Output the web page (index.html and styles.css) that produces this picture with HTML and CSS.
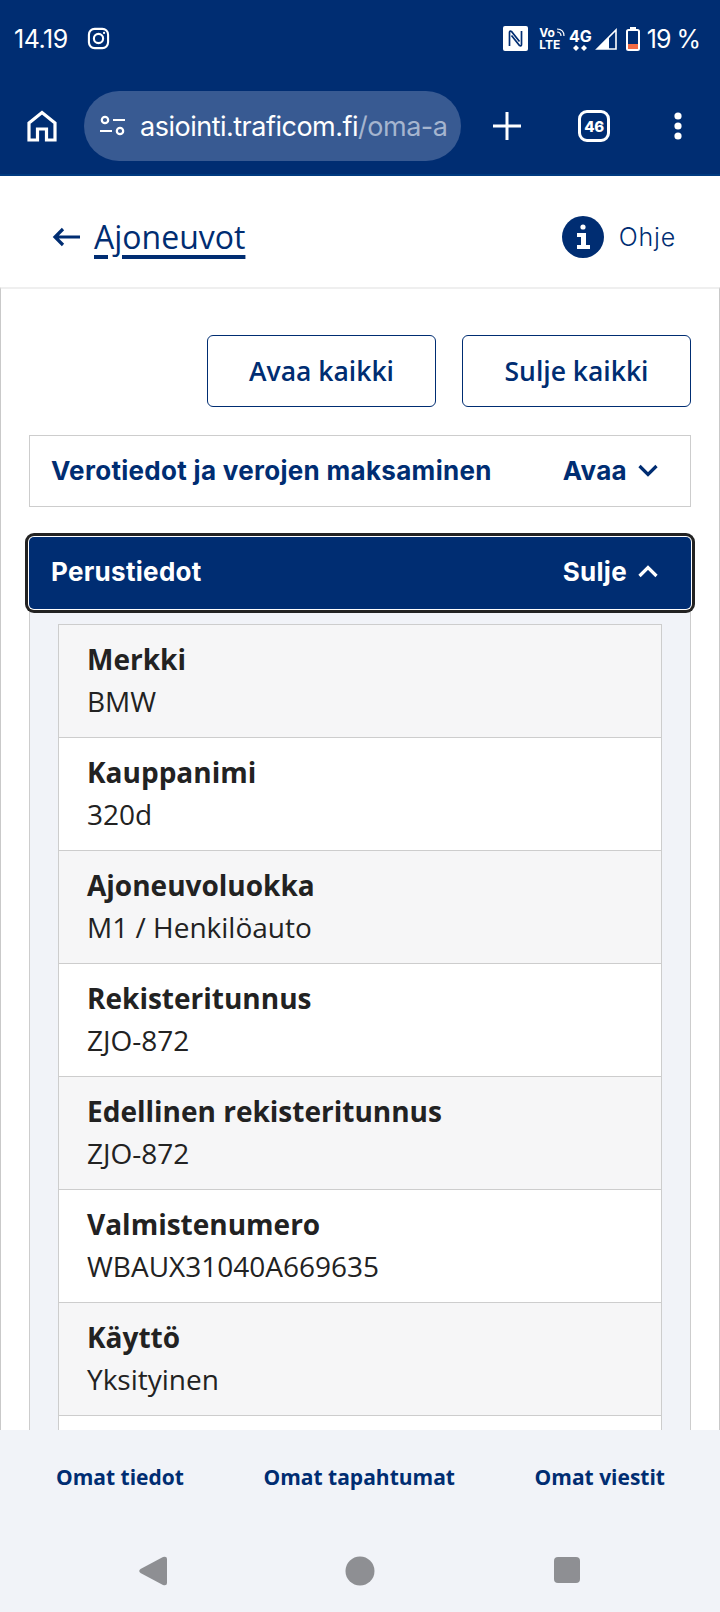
FILE: index.html
```html
<!DOCTYPE html>
<html lang="fi">

<head>
  <meta charset="UTF-8">
  <meta name="viewport" content="width=device-width, initial-scale=1.0">
  <title>Ajoneuvot</title>
  <link rel="stylesheet" href="styles.css">
</head>

<body>
  <div class="status-bar">
    <div class="status-left">
      <span class="status-time">14.19</span>
      <svg class="ig-icon" width="23" height="23" viewBox="0 0 24 24" fill="none" stroke="#fff" stroke-width="2.2">
        <rect x="2" y="2" width="20" height="20" rx="6"/>
        <circle cx="12" cy="12" r="4.8"/>
        <circle cx="17.8" cy="6.2" r="1.2" fill="#fff" stroke="none"/>
      </svg>
    </div>
    <div class="status-right">
      <svg width="25" height="25" viewBox="0 0 25 25">
        <rect width="25" height="25" rx="2" fill="#fff"/>
        <path fill="none" stroke="#002d72" stroke-width="1.7" d="M6.5 20V6.5Q6.5 4.5 8.5 5.5L16.5 15.5M18.5 5V18.5Q18.5 20.5 16.5 19.5L8.5 9.5"/>
      </svg>
      <div class="net-label">
        <span>Vo<svg width="10" height="10" viewBox="0 0 10 10" fill="none" stroke="#fff" stroke-width="1.2"><path d="M1 2Q8 2 8 9M1 5Q5 5 5 9"/></svg></span>
        <span>LTE</span>
      </div>
      <div class="net-type">
        <span>4G</span>
        <svg width="14" height="6" viewBox="0 0 14 6" fill="#fff"><path d="M0 3L3 0L6 3L3 6Z"/><path d="M8 3L11 0L14 3L11 6Z"/></svg>
      </div>
      <svg class="signal-icon" width="22" height="22" viewBox="0 0 22 22" fill="none" stroke="#fff" stroke-width="1.6">
        <path d="M2 21L21 2V21Z"/>
        <path d="M2 21L14 9V21Z" fill="#fff" stroke="none"/>
      </svg>
      <svg class="battery-icon" width="14" height="24" viewBox="0 0 14 24">
        <path fill="#fff" d="M4 0H10V2H4Z"/>
        <rect x="1" y="3" width="12" height="20" rx="1.5" fill="none" stroke="#fff" stroke-width="2"/>
        <rect x="2" y="17" width="10" height="5" fill="#f26b43"/>
      </svg>
      <span class="status-battery">19 %</span>
    </div>
  </div>

  <div class="toolbar">
    <svg width="30" height="32" viewBox="0 0 30 32" fill="none" stroke="#fff" stroke-width="3.2">
      <path d="M2 30V13L15 2.5L28 13V30H19.5V19H10.5V30Z"/>
    </svg>
    <div class="url-pill">
      <svg width="28" height="22" viewBox="0 0 28 22" fill="none" stroke="#fff" stroke-width="2.2">
        <circle cx="6" cy="5" r="3.2"/>
        <path d="M14 5H26M1 16H13"/>
        <circle cx="21" cy="16" r="3.2"/>
      </svg>
      <span class="url-text">asiointi.traficom.fi<span class="url-path">/oma-a</span></span>
    </div>
    <svg class="plus-icon" width="28" height="28" viewBox="0 0 28 28" stroke="#fff" stroke-width="3">
      <path d="M0 14H28M14 0V28"/>
    </svg>
    <div class="tab-count">46</div>
    <svg class="menu-icon" width="10" height="28" viewBox="0 0 10 28" fill="#fff">
      <circle cx="5" cy="4" r="3.6"/>
      <circle cx="5" cy="14" r="3.6"/>
      <circle cx="5" cy="24" r="3.6"/>
    </svg>
  </div>

  <div class="page-head">
    <a class="back-link">
      <svg width="28" height="20" viewBox="0 0 28 20" fill="none" stroke="#002d72" stroke-width="3.2">
        <path d="M11 2L3 10L11 18M3 10H28"/>
      </svg>
      <span>Ajoneuvot</span>
    </a>
    <div class="help-link">
      <svg width="42" height="42" viewBox="0 0 42 42">
        <circle cx="21" cy="21" r="21" fill="#002d72"/>
        <circle cx="21" cy="11" r="2.6" fill="#fff"/>
        <path fill="#fff" d="M15 17H24V29H28V33H15V29H19V21H15Z"/>
      </svg>
      <span>Ohje</span>
    </div>
  </div>

  <main class="content">
    <div class="actions">
      <button class="btn">Avaa kaikki</button>
      <button class="btn">Sulje kaikki</button>
    </div>

    <div class="acc-head">
      <span>Verotiedot ja verojen maksaminen</span>
      <span class="acc-toggle">Avaa
        <svg width="20" height="13" viewBox="0 0 20 13" fill="none" stroke="#002d72" stroke-width="3.2"><path d="M1.5 2L10 10.5L18.5 2"/></svg>
      </span>
    </div>

    <div class="acc-open">
      <div class="acc-head acc-head-active">
        <span>Perustiedot</span>
        <span class="acc-toggle">Sulje
          <svg width="20" height="13" viewBox="0 0 20 13" fill="none" stroke="#fff" stroke-width="3.2"><path d="M1.5 11L10 2.5L18.5 11"/></svg>
        </span>
      </div>
      <div class="acc-panel">
        <dl class="info-list">
          <div class="info-row"><dt>Merkki</dt><dd>BMW</dd></div>
          <div class="info-row"><dt>Kauppanimi</dt><dd>320d</dd></div>
          <div class="info-row"><dt>Ajoneuvoluokka</dt><dd>M1 / Henkilöauto</dd></div>
          <div class="info-row"><dt>Rekisteritunnus</dt><dd>ZJO-872</dd></div>
          <div class="info-row"><dt>Edellinen rekisteritunnus</dt><dd>ZJO-872</dd></div>
          <div class="info-row"><dt>Valmistenumero</dt><dd>WBAUX31040A669635</dd></div>
          <div class="info-row"><dt>Käyttö</dt><dd>Yksityinen</dd></div>
          <div class="info-row"></div>
        </dl>
      </div>
    </div>
  </main>

  <nav class="bottom-nav">
    <a>Omat tiedot</a>
    <a>Omat tapahtumat</a>
    <a>Omat viestit</a>
  </nav>

  <div class="system-nav">
    <svg width="28" height="30" viewBox="0 0 28 30" fill="#8e8f93">
      <path d="M1.5 13L24 1Q28 0 28 3V27Q28 30 24 29L1.5 17Q-1 15 1.5 13Z"/>
    </svg>
    <svg width="30" height="30" viewBox="0 0 30 30" fill="#8e8f93"><circle cx="15" cy="15" r="14.5"/></svg>
    <svg width="28" height="28" viewBox="0 0 28 28" fill="#8e8f93"><rect x="1" y="1" width="26" height="26" rx="4"/></svg>
  </div>
</body>

</html>
```

FILE: styles.css
```css
* {
  box-sizing: border-box;
}

html,
body {
  margin: 0;
  height: 100%;
}

body {
  display: flex;
  flex-direction: column;
  height: 1612px;
  overflow: hidden;
  font-family: 'Open Sans', Arial, sans-serif;
  background-color: #fff;
  color: #222;
}

.status-bar {
  height: 78px;
  flex: none;
  display: flex;
  justify-content: space-between;
  align-items: center;
  padding: 0 20px 1px 14px;
  background-color: #002d72;
  color: #fff;
  font-family: 'Inter', Roboto, sans-serif;
}

.status-left,
.status-right {
  display: flex;
  align-items: center;
}

.status-time {
  font-size: 25px;
  letter-spacing: -0.5px;
  margin-right: 19px;
}

.net-label {
  display: flex;
  flex-direction: column;
  margin-left: 11px;
  font-size: 12px;
  font-weight: 700;
  line-height: 12px;
}

.net-label svg {
  margin-left: 1px;
}

.net-type {
  display: flex;
  flex-direction: column;
  align-items: center;
  margin-left: 3px;
  font-size: 16px;
  font-weight: 700;
  line-height: 18px;
}

.signal-icon {
  margin-left: 3px;
}

.battery-icon {
  margin-left: 9px;
}

.status-battery {
  font-size: 25px;
  letter-spacing: -1px;
  margin-left: 7px;
}

.toolbar {
  height: 98px;
  flex: none;
  display: flex;
  align-items: center;
  padding-left: 27px;
  background-color: #002d72;
  border-bottom: 2px solid #003a80;
}

.url-pill {
  width: 377px;
  height: 70px;
  margin-left: 27px;
  display: flex;
  align-items: center;
  gap: 13px;
  padding-left: 15px;
  overflow: hidden;
  border-radius: 35px;
  background-color: #385a92;
}

.url-text {
  font-family: 'Inter', Roboto, sans-serif;
  font-size: 27px;
  letter-spacing: -0.5px;
  color: #fff;
  white-space: nowrap;
}

.url-path {
  color: #a5b5cf;
}

.plus-icon {
  margin-left: 32px;
}

.tab-count {
  width: 32px;
  height: 32px;
  margin-left: 57px;
  display: flex;
  align-items: center;
  justify-content: center;
  border: 3px solid #fff;
  border-radius: 9px;
  color: #fff;
  font-family: 'Inter', Roboto, sans-serif;
  font-size: 15px;
  font-weight: 800;
  letter-spacing: -0.5px;
}

.menu-icon {
  margin-left: 63px;
}

.page-head {
  height: 111px;
  flex: none;
  display: flex;
  justify-content: space-between;
  align-items: center;
  padding: 10px 44px 0 52px;
}

.back-link {
  display: flex;
  align-items: center;
  gap: 14px;
  color: #002d72;
  font-size: 32px;
}

.back-link span {
  text-decoration: underline;
  text-decoration-thickness: 4px;
  text-underline-offset: 6px;
}

.help-link {
  display: flex;
  align-items: center;
  gap: 15px;
  color: #002d72;
  font-family: 'Inter', sans-serif;
  font-size: 25px;
  font-weight: 300;
  letter-spacing: 0.8px;
}

.content {
  flex: 1;
  min-height: 0;
  overflow: hidden;
  padding: 0 28px 0 28px;
  border: 1px solid #c9c9c9;
  border-top: 2px solid #efefef;
  border-bottom: none;
}

.actions {
  display: flex;
  justify-content: flex-end;
  gap: 26px;
  padding-top: 46px;
}

.btn {
  width: 229px;
  height: 72px;
  border: 1.5px solid #002d72;
  border-radius: 6px;
  background-color: #fff;
  color: #002d72;
  font-family: 'Open Sans', Arial, sans-serif;
  font-size: 26.5px;
  font-weight: 600;
}

.acc-head {
  height: 72px;
  margin-top: 28px;
  display: flex;
  justify-content: space-between;
  align-items: center;
  padding: 0 32px 2px 21px;
  border: 1px solid #cdcdcd;
  color: #002d72;
  font-family: 'Inter', sans-serif;
  font-size: 26px;
  font-weight: 700;
  letter-spacing: 0.3px;
}

.acc-toggle {
  display: flex;
  align-items: center;
  gap: 11px;
}

.acc-open {
  margin-top: 30px;
}

.acc-head-active {
  position: relative;
  margin-top: 0;
  padding: 0 33px 4px 22px;
  border: none;
  border-radius: 5px;
  background-color: #002d72;
  color: #fff;
  box-shadow: 0 0 0 1px #fff, 0 0 0 4px #222;
}

.acc-panel {
  padding: 15px 28px 0;
  border: 1px solid #cdcdcd;
  border-top: none;
  border-bottom: none;
  background-color: #f1f3f8;
}

.info-list {
  margin: 0;
  border: 1px solid #cdcdcd;
  border-bottom: none;
}

.info-row {
  height: 113px;
  padding: 14px 28px 0;
  border-bottom: 1px solid #cdcdcd;
  background-color: #fff;
}

.info-row:nth-child(odd) {
  background-color: #f6f6f7;
}

.info-row:last-child {
  background-color: #fff;
}

.info-row dt {
  font-size: 28px;
  font-weight: 700;
  line-height: 40px;
}

.info-row dd {
  margin: 0;
  font-size: 28px;
  line-height: 44px;
}

.bottom-nav {
  height: 100px;
  flex: none;
  display: flex;
  justify-content: space-between;
  padding: 31px 55px 0 56px;
  background-color: #f1f3f8;
  color: #002d72;
  font-size: 21px;
  font-weight: 700;
  line-height: 32px;
}

.system-nav {
  height: 82px;
  flex: none;
  display: flex;
  justify-content: space-between;
  align-items: flex-start;
  padding: 26px 139px 0;
  background-color: #f1f3f8;
}
```
